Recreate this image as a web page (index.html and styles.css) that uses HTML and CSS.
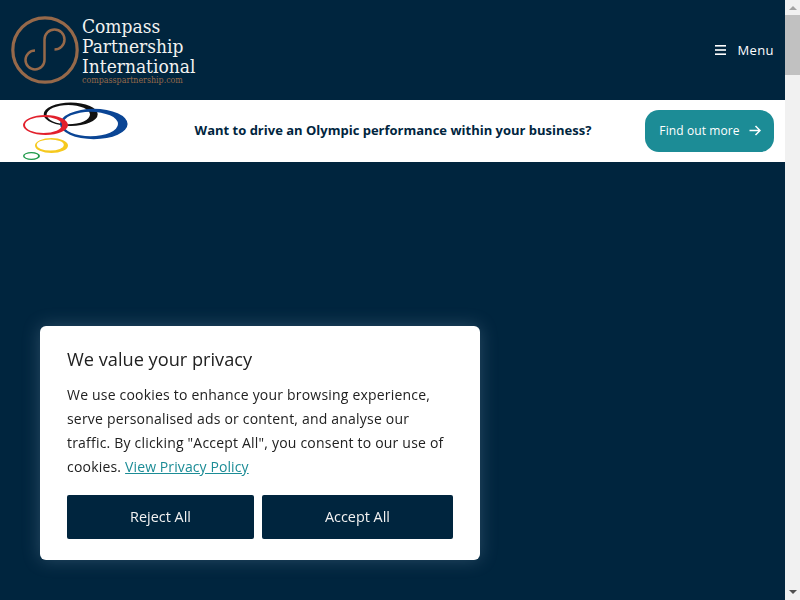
FILE: index.html
```html
<!doctype html>
<html lang="en">
<head>
    <meta charset="UTF-8">
    <meta name="viewport" content="width=device-width, initial-scale=1.0">
    <title>Compass Partnership International</title>
    <link rel="stylesheet" href="styles.css">
</head>
<body>
<div class="page">
    <div class="main">
        <header class="site-header">
            <a class="logo" href="#">
                <svg class="logo-mark" width="68" height="68" viewBox="0 0 68 68" fill="none" stroke="#96694a">
                    <circle cx="34" cy="34" r="32.2" stroke-width="3.2"/>
                    <path d="M43.5 33.5 A10 10 0 1 0 33.5 23.500 L33.500 44 A9.500 9.500 0 1 1 24 34.500" stroke-width="2.500"/>
                </svg>
                <div class="logo-text">
                    <div class="logo-name">Compass</div>
                    <div class="logo-name">Partnership</div>
                    <div class="logo-name">International</div>
                    <div class="logo-url">compasspartnership.com</div>
                </div>
            </a>
            <a class="menu-toggle" href="#">
                <svg width="11" height="10" viewBox="0 0 11 10" fill="#fff">
                    <rect width="11" height="1.6" y="0"/>
                    <rect width="11" height="1.6" y="4.2"/>
                    <rect width="11" height="1.6" y="8.4"/>
                </svg>
                <span>Menu</span>
            </a>
        </header>

        <section class="promo">
            <svg class="rings" width="110" height="60" viewBox="0 0 110 60" fill-rule="evenodd">
                <path fill="#111" d="M22.700 13.300 a27 11.700 0 1 0 54 0 a27 11.700 0 1 0 -54 0Z M25.600 13.600 a21.700 9.600 0 1 0 43.400 0 a21.700 9.600 0 1 0 -43.400 0Z"/>
                <path fill="#0a4595" d="M39 23 a33.800 15.200 0 1 0 67.600 0 a33.800 15.200 0 1 0 -67.600 0Z M42 23 a27.500 12.300 0 1 0 55 0 a27.500 12.300 0 1 0 -55 0Z"/>
                <path fill="#e2202c" d="M2 24 a22.500 10 0 1 0 45 0 a22.500 10 0 1 0 -45 0Z M4 24 a18.500 8 0 1 0 37 0 a18.500 8 0 1 0 -37 0Z"/>
                <path fill="#f6c91e" d="M14 44.500 a16.500 7.500 0 1 0 33 0 a16.500 7.500 0 1 0 -33 0Z M15.800 44 a13.500 5.600 0 1 0 27 0 a13.500 5.600 0 1 0 -27 0Z"/>
                <path fill="#1f9a4a" d="M2 55 a8.500 4 0 1 0 17 0 a8.500 4 0 1 0 -17 0Z M3.500 55 a6.800 2.700 0 1 0 13.600 0 a6.800 2.700 0 1 0 -13.600 0Z"/>
            </svg>
            <p class="promo-text">Want to drive an Olympic performance within your business?</p>
            <a class="promo-btn" href="#">
                Find out more
                <svg width="12" height="11" viewBox="0 0 12 11" fill="none" stroke="#fff" stroke-width="1.500">
                    <path d="M0.500 5.500 H11 M6.500 1 L11 5.500 L6.500 10"/>
                </svg>
            </a>
        </section>

        <div class="hero"></div>
    </div>

    <div class="scrollbar">
        <div class="arrow-up"></div>
        <div class="thumb"></div>
        <div class="arrow-down"></div>
    </div>
</div>

<div class="cookie-box">
    <h2 class="cookie-title">We value your privacy</h2>
    <p class="cookie-text">We use cookies to enhance your browsing experience, serve personalised ads or content, and analyse our traffic. By clicking "Accept All", you consent to our use of cookies. <a href="#">View Privacy Policy</a></p>
    <div class="cookie-actions">
        <button class="reject">Reject All</button>
        <button class="accept">Accept All</button>
    </div>
</div>
</body>
</html>
```

FILE: styles.css
```css
*, *::after, *::before {
    box-sizing: border-box;
    margin: 0;
    padding: 0;
}

:root {
    --navy: #00253e;
    --teal: #1c8c96;
}

html, body {
    height: 100%;
    overflow: hidden;
}

body {
    font-family: "Open Sans", sans-serif;
    color: #212121;
}

a {
    text-decoration: none;
}

.page {
    display: flex;
    height: 100vh;
}

.main {
    flex: 1;
    display: flex;
    flex-direction: column;
    min-width: 0;
}

.site-header {
    height: 100px;
    background-color: var(--navy);
    display: flex;
    justify-content: space-between;
    align-items: center;
    padding: 0 11px;
}

.logo {
    display: flex;
    align-items: center;
    gap: 3px;
}

.logo-mark {
    flex: none;
}

.logo-text {
    font-family: "DejaVu Serif", serif;
    font-stretch: condensed;
    color: #f2f2f0;
    padding-top: 1px;
}

.logo-name {
    font-size: 19px;
    line-height: 20px;
}

.logo-url {
    font-size: 8.800px;
    line-height: 9px;
    color: #96694a;
}

.menu-toggle {
    display: flex;
    align-items: center;
    gap: 11px;
    color: #fff;
    font-size: 13px;
    letter-spacing: 0.4px;
}

.promo {
    height: 62px;
    background-color: #fff;
    display: flex;
    align-items: center;
    padding: 0 11px 0 21px;
}

.rings {
    flex: none;
}

.promo-text {
    flex: 1;
    text-align: center;
    font-size: 13px;
    font-weight: 700;
    color: var(--navy);
    padding: 0 0 2px 10px;
}

.promo-btn {
    width: 129px;
    height: 42px;
    background-color: var(--teal);
    border-radius: 14px;
    color: #fff;
    font-size: 12px;
    letter-spacing: 0.1px;
    display: flex;
    align-items: center;
    justify-content: center;
    gap: 9px;
    padding: 0 0 1px 1px;
}

.hero {
    flex: 1;
    background-color: var(--navy);
}

.scrollbar {
    width: 15px;
    background-color: #f1f1f1;
    display: flex;
    flex-direction: column;
    align-items: center;
}

.arrow-up {
    margin-top: 6px;
    border-left: 4px solid transparent;
    border-right: 4px solid transparent;
    border-bottom: 4px solid #a3a3a3;
}

.thumb {
    width: 100%;
    height: 60px;
    margin-top: 5px;
    background-color: #c1c1c1;
}

.arrow-down {
    margin-top: auto;
    margin-bottom: 6px;
    border-left: 4px solid transparent;
    border-right: 4px solid transparent;
    border-top: 4px solid #505050;
}

/* floats over the page, bottom left */
.cookie-box {
    position: fixed;
    left: 40px;
    top: 326px;
    width: 440px;
    height: 234px;
    background-color: #fff;
    border-radius: 6px;
    padding: 21px 27px 21px;
    box-shadow: 0 0 18px rgba(130, 160, 185, 0.32);
}

.cookie-title {
    font-size: 18.200px;
    font-weight: 400;
    line-height: 24px;
    margin-bottom: 12px;
}

.cookie-text {
    font-size: 14px;
    line-height: 24px;
    letter-spacing: 0.2px;
}

.cookie-text a {
    color: var(--teal);
    text-decoration: underline;
    letter-spacing: 0.1px;
}

.cookie-actions {
    display: flex;
    gap: 8px;
    margin-top: 16px;
}

.cookie-actions button {
    height: 44px;
    background-color: var(--navy);
    color: #f2f2f2;
    border: none;
    border-radius: 2px;
    font-family: inherit;
    font-size: 14.400px;
    padding-bottom: 2px;
}

.reject {
    width: 187px;
}

.accept {
    width: 191px;
}
```
